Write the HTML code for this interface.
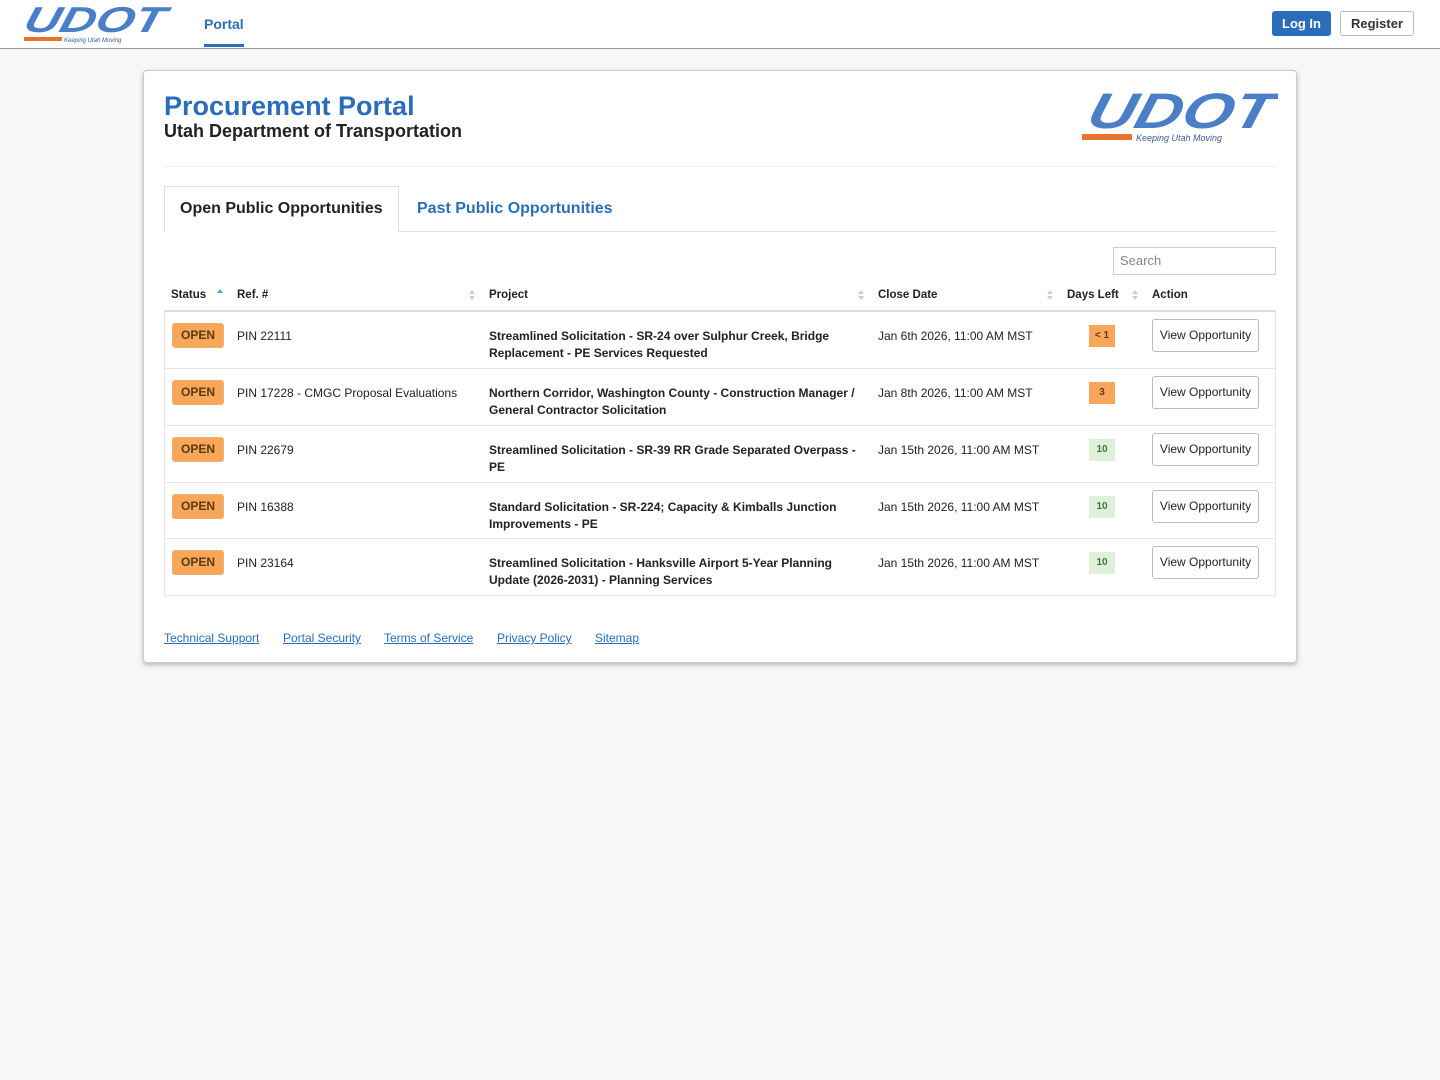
<!DOCTYPE html>
<html><head><meta charset="utf-8"><style>
*{box-sizing:border-box;margin:0;padding:0}
body{width:1440px;height:1080px;background:#f7f7f7;font-family:"Liberation Sans",sans-serif;color:#222;position:relative;overflow:hidden}
.top{position:absolute;left:0;top:0;width:1440px;height:49px;background:#fff;border-bottom:1px solid #999}
.portal{position:absolute;left:204px;top:16px;font-size:14px;color:#2a6ebb;font-weight:bold}
.portal:after{content:"";position:absolute;left:0;top:28px;width:40px;height:3px;background:#2a6ebb}
.btn{position:absolute;top:11px;height:25px;font-size:13px;font-weight:bold;border-radius:3px;line-height:23px;text-align:center}
.card{position:absolute;left:143px;top:70px;width:1154px;height:593px;background:#fff;border:1px solid #ccc;border-radius:4px;box-shadow:0 2px 5px rgba(0,0,0,.25)}
.abs{position:absolute}
.th{position:absolute;top:289px;font-size:11.5px;font-weight:bold}
.sort{position:absolute;width:6px;height:12px}
.row{position:absolute;left:164px;width:1112px;border-bottom:1px solid #e5e5e5;font-size:12px}
.badge{position:absolute;left:8px;top:11px;width:52px;height:25px;background:#f7a65a;border-radius:3px;border:1px solid #f0b070;font-weight:bold;font-size:12px;color:#5a3a10;text-align:center;line-height:23px}
.c{position:absolute;top:17px}
.proj{position:absolute;left:325px;top:16px;width:375px;font-weight:bold;line-height:17px;font-size:12px}
.days{position:absolute;left:925px;top:13px;width:26px;height:22px;font-size:10px;font-weight:bold;text-align:center;line-height:22px}
.or{background:#f7a65a;color:#5a3a10}.gr{background:#dff0d8;color:#3c763d}
.view{position:absolute;left:988px;top:7px;width:107px;height:33px;border:1px solid #bbb;border-radius:3px;font-size:12px;line-height:31px;text-align:center}
.foot a{position:absolute;top:631px;font-size:12px;color:#2a6ebb;text-decoration:underline}
</style></head><body>
<div class="top">
<svg class="abs" style="left:22px;top:2px" width="150" height="44" viewBox="0 0 150 44">
<text x="8" y="30" font-family="Liberation Sans" font-weight="bold" font-style="italic" font-size="36" fill="#4a7ec6" transform="skewX(-15)" textLength="140" lengthAdjust="spacingAndGlyphs">UDOT</text>
<rect x="2" y="35" width="38" height="4" fill="#e8742a"/>
<text x="42" y="40" font-family="Liberation Sans" font-style="italic" font-size="6" fill="#3a5a9a">Keeping Utah Moving</text>
</svg>
<div class="portal">Portal</div>
<div class="btn" style="left:1272px;width:59px;background:#2a6ebb;color:#fff;border:1px solid #2a6ebb">Log In</div>
<div class="btn" style="left:1340px;width:74px;background:#fff;color:#333;border:1px solid #bbb">Register</div>
</div>
<div class="card"></div>
<div class="abs" style="left:164px;top:91px;font-size:27px;font-weight:bold;color:#2a6ebb">Procurement Portal</div>
<div class="abs" style="left:164px;top:121px;font-size:18px;font-weight:bold;color:#222">Utah Department of Transportation</div>
<svg class="abs" style="left:1078px;top:86px" width="200" height="62" viewBox="0 0 200 62">
<text x="18" y="42" font-family="Liberation Sans" font-weight="bold" font-style="italic" font-size="50" fill="#4a7ec6" transform="skewX(-15)" textLength="185" lengthAdjust="spacingAndGlyphs">UDOT</text>
<rect x="4" y="48" width="50" height="6" fill="#e8742a"/>
<text x="58" y="55" font-family="Liberation Sans" font-style="italic" font-size="9" fill="#3a5a9a">Keeping Utah Moving</text>
</svg>
<div class="abs" style="left:164px;top:166px;width:1112px;border-top:1px solid #eee"></div>
<div class="abs" style="left:164px;top:231px;width:1112px;border-top:1px solid #ddd"></div>
<div class="abs" style="left:164px;top:186px;width:235px;height:46px;background:#fff;border:1px solid #ddd;border-bottom:none;font-size:16px;font-weight:bold;line-height:44px;padding-left:15px;color:#222">Open Public Opportunities</div>
<div class="abs" style="left:417px;top:200px;font-size:16px;font-weight:bold;color:#2a6ebb">Past Public Opportunities</div>
<div class="abs" style="left:1113px;top:247px;width:163px;height:28px;border:1px solid #ccc;font-size:13px;color:#888;line-height:26px;padding-left:6px">Search</div>
<div class="th" style="left:171px">Status</div><svg class="sort" style="left:217px;top:288px"><path d="M0 5 L3 1 L6 5Z" fill="#5a9ad6"/></svg>
<div class="th" style="left:237px">Ref. #</div><svg class="sort" style="left:469px;top:289px"><path d="M0 5L3 1L6 5ZM0 7L3 11L6 7Z" fill="#ccc"/></svg>
<div class="th" style="left:489px">Project</div><svg class="sort" style="left:858px;top:289px"><path d="M0 5L3 1L6 5ZM0 7L3 11L6 7Z" fill="#ccc"/></svg>
<div class="th" style="left:878px">Close Date</div><svg class="sort" style="left:1047px;top:289px"><path d="M0 5L3 1L6 5ZM0 7L3 11L6 7Z" fill="#ccc"/></svg>
<div class="th" style="left:1067px">Days Left</div><svg class="sort" style="left:1132px;top:289px"><path d="M0 5L3 1L6 5ZM0 7L3 11L6 7Z" fill="#ccc"/></svg>
<div class="th" style="left:1152px">Action</div>
<div class="abs" style="left:164px;top:310px;width:1112px;height:286px;border:1px solid #e5e5e5;border-top:2px solid #ddd"></div>
<div class="row" style="top:312px;height:57px"><div class="badge">OPEN</div><div class="c" style="left:73px">PIN 22111</div><div class="proj">Streamlined Solicitation - SR-24 over Sulphur Creek, Bridge Replacement - PE Services Requested</div><div class="c" style="left:714px">Jan 6th 2026, 11:00 AM MST</div><div class="days or">&lt; 1</div><div class="view">View Opportunity</div></div>
<div class="row" style="top:369px;height:57px"><div class="badge">OPEN</div><div class="c" style="left:73px">PIN 17228 - CMGC Proposal Evaluations</div><div class="proj">Northern Corridor, Washington County - Construction Manager / General Contractor Solicitation</div><div class="c" style="left:714px">Jan 8th 2026, 11:00 AM MST</div><div class="days or">3</div><div class="view">View Opportunity</div></div>
<div class="row" style="top:426px;height:57px"><div class="badge">OPEN</div><div class="c" style="left:73px">PIN 22679</div><div class="proj">Streamlined Solicitation - SR-39 RR Grade Separated Overpass - PE</div><div class="c" style="left:714px">Jan 15th 2026, 11:00 AM MST</div><div class="days gr">10</div><div class="view">View Opportunity</div></div>
<div class="row" style="top:483px;height:56px"><div class="badge">OPEN</div><div class="c" style="left:73px">PIN 16388</div><div class="proj">Standard Solicitation - SR-224; Capacity &amp; Kimballs Junction Improvements - PE</div><div class="c" style="left:714px">Jan 15th 2026, 11:00 AM MST</div><div class="days gr">10</div><div class="view">View Opportunity</div></div>
<div class="row" style="top:539px;height:57px;border-bottom:none"><div class="badge">OPEN</div><div class="c" style="left:73px">PIN 23164</div><div class="proj">Streamlined Solicitation - Hanksville Airport 5-Year Planning Update (2026-2031) - Planning Services</div><div class="c" style="left:714px">Jan 15th 2026, 11:00 AM MST</div><div class="days gr">10</div><div class="view">View Opportunity</div></div>
<div class="foot"><a style="left:164px">Technical Support</a><a style="left:283px">Portal Security</a><a style="left:384px">Terms of Service</a><a style="left:497px">Privacy Policy</a><a style="left:595px">Sitemap</a></div>
</body></html>
